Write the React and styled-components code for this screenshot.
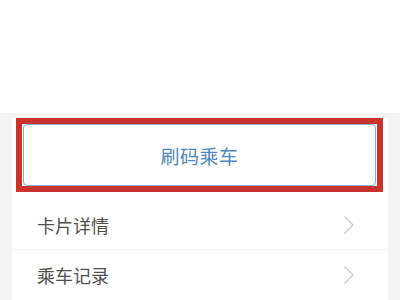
import React from 'react';
import styled, { createGlobalStyle } from 'styled-components';

const GlobalStyle = createGlobalStyle`
  html, body {
    margin: 0;
    padding: 0;
    background: #f4f4f4;
    font-family: "Noto Sans CJK SC", "Noto Sans", sans-serif;
  }
`;

const Page = styled.div`
  width: 400px;
  height: 300px;
  overflow: hidden;
  display: flex;
  flex-direction: column;
  gap: 5px;
`;

const Header = styled.div`
  height: 117px;
  background: #fff;
`;

const Card = styled.div`
  margin: 0 12px;
  background: #fff;
  display: flex;
  flex-direction: column;
`;

const Highlight = styled.div`
  margin: 0 5px 0 4px;
  border: 6px solid #c9322d;
  padding: 0 1px;
  height: 74px;
  box-sizing: border-box;
  display: flex;
`;

const RideButton = styled.div`
  width: 100%;
  box-sizing: border-box;
  display: flex;
  align-items: center;
  justify-content: center;
  border: 1px solid #82b1dc;
  border-radius: 4px;
  background: #fff;
  color: #4d87c2;
  font-size: 19px;
  letter-spacing: 0.5px;
  cursor: pointer;
`;

const List = styled.ul`
  list-style: none;
  margin: 8px 0 0;
  padding: 0;
`;

const Row = styled.li`
  height: 50px;
  display: flex;
  align-items: center;
  justify-content: space-between;
  padding: 0 33px 0 25px;
  color: #4f4f4f;
  font-size: 18px;
  border-bottom: 1px solid ${(p) => (p.last ? 'transparent' : '#f3f3f3')};
  box-sizing: border-box;
`;

const Chevron = () => (
  <svg width="12" height="20" viewBox="0 0 12 20" fill="none">
    <path d="M1.5 1.5 L10 10 L1.5 18.5" stroke="#c9c9c9" strokeWidth="1.3" />
  </svg>
);

const items = ['卡片详情', '乘车记录'];

export default function App() {
  return (
    <>
      <GlobalStyle />
      <Page>
        <Header />
        <Card>
          <Highlight>
            <RideButton role="button">刷码乘车</RideButton>
          </Highlight>
          <List>
            {items.map((item, i) => (
              <Row key={item} last={i === items.length - 1}>
                {item}
                <Chevron />
              </Row>
            ))}
          </List>
        </Card>
      </Page>
    </>
  );
}
